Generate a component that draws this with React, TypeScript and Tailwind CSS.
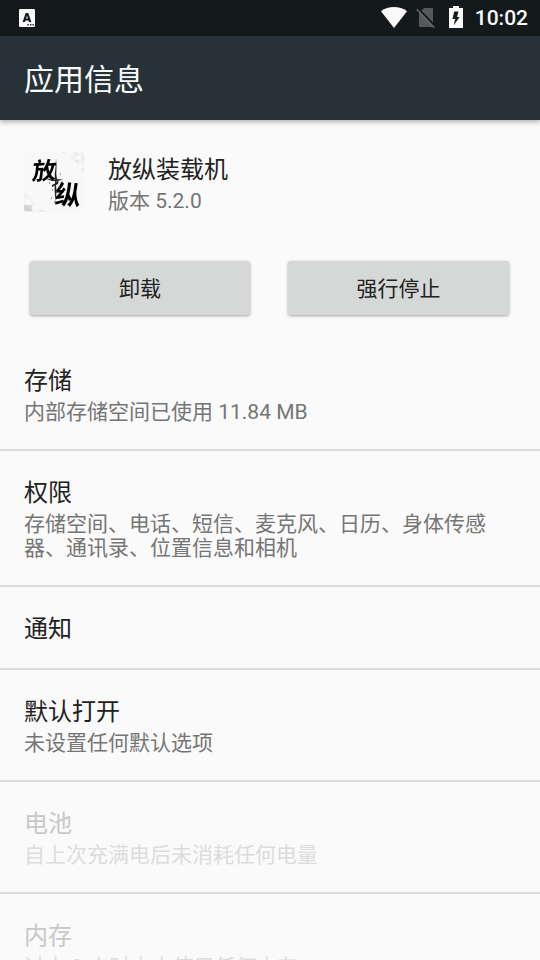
import React from 'react';

type Row = { title: string; summary?: string; disabled?: boolean; height: string };

const rows: Row[] = [
  { title: '存储', summary: '内部存储空间已使用 11.84 MB', height: 'h-[112px]' },
  {
    title: '权限',
    summary: '存储空间、电话、短信、麦克风、日历、身体传感器、通讯录、位置信息和相机',
    height: 'h-[136px]',
  },
  { title: '通知', height: 'h-[83px]' },
  { title: '默认打开', summary: '未设置任何默认选项', height: 'h-[112px]' },
  { title: '电池', summary: '自上次充满电后未消耗任何电量', disabled: true, height: 'h-[112px]' },
  { title: '内存', summary: '过去 3 小时内未使用任何内存', disabled: true, height: 'h-[112px]' },
];

function StatusBar() {
  return (
    <div className="flex h-9 shrink-0 items-center justify-between bg-[#14191c] pr-3 pl-[19px] text-[#fafafa]">
      <svg width="16" height="18" viewBox="0 0 16 18">
        <rect width="16" height="18" rx="1.2" fill="#fafafa" />
        <path d="M3.6 13 6.7 4h2.6l3.1 9H10l-.5-1.6h-3L6 13Zm3.5-3.4h1.8L8 6.6Z" fill="#14191c" fillRule="evenodd" />
        <path d="M8.3 15.8h1.4M11 15.8h1.4M13.5 15.8h1.3" stroke="#14191c" strokeWidth="1.5" />
      </svg>
      <div className="flex items-center">
        <div className="flex items-center pb-0.5">
          <svg width="26" height="21" viewBox="0 0 26 21" className="mr-[9px]">
            <path d="M0 4.2C3.8 1.4 8.2 0 13 0s9.2 1.4 13 4.2L13 21Z" fill="#fafafa" />
          </svg>
          <svg width="20" height="22" viewBox="0 0 20 22" className="mr-[13px]">
            <path d="M8 2h8q1 0 1 1v17q0 1-1 1H4q-1 0-1-1V7Z" fill="#55595b" />
            <path d="M2 2.5 19.5 20.5" stroke="#14191c" strokeWidth="2" />
            <path d="M.8 3.3 18.3 21.8" stroke="#65696b" strokeWidth="1.5" />
          </svg>
          <svg width="14" height="22" viewBox="0 0 14 22" className="mr-3">
            <path d="M4 0h6v2h4v20H0V2h4Z" fill="#fafafa" />
            <path d="M9.5 5.5H5.2L3.5 13h2.6l-1.3 6.3L10.6 11H8Z" fill="#14191c" />
          </svg>
        </div>
        <span className="pt-px text-[21px] leading-none font-medium">10:02</span>
      </div>
    </div>
  );
}

function AppIcon() {
  return (
    <svg width="60" height="60" viewBox="0 0 60 60" className="shrink-0">
      <defs>
        <filter id="ink" x="0" y="0" width="1" height="1">
          <feTurbulence type="fractalNoise" baseFrequency="0.12" numOctaves="3" seed="4" result="n" />
          <feColorMatrix in="n" values="0 0 0 0 .65  0 0 0 0 .65  0 0 0 0 .65  1.5 0 0 0 -.55" result="c" />
          <feComposite in="c" in2="SourceGraphic" operator="in" />
        </filter>
        <filter id="rough" x="-.1" y="-.1" width="1.2" height="1.2">
          <feTurbulence type="fractalNoise" baseFrequency="0.2" numOctaves="1" seed="7" result="n" />
          <feDisplacementMap in="SourceGraphic" in2="n" scale="1.5" xChannelSelector="R" yChannelSelector="G" />
        </filter>
      </defs>
      <rect width="60" height="60" fill="#f8f8f8" />
      <path d="M37 0h23v23Q54 8 37 0ZM0 36Q8 54 24 60H0Z" filter="url(#ink)" />
      <rect x="0" y="53" width="8" height="6" fill="#aaa" opacity=".35" />
      <g
        fill="#050505"
        fontWeight="700"
        fontFamily="'Noto Sans CJK SC', sans-serif"
        filter="url(#rough)"
      >
        <text fontSize="24" transform="translate(7.5 28) skewX(-8) rotate(-3)">放</text>
        <text fontSize="26" transform="translate(30 51.5) skewX(-2) rotate(4)">纵</text>
      </g>
      <path
        d="m32 6 .5 9-.2 7 .7 5-1 6 .5 7-1 10-1-13 .6-7-.4-8 .8-6ZM22 26l7 2 3-1 7 .5-6 1.5-5 0-8-3ZM28 33l4-2 3-4-1 5-6 3Z"
        fill="#222"
      />
      <path d="M27 24h1M36 22h1M25 31h1M38 30h1M28 38h1M27 46h1M35 35h1M30 50h1" stroke="#444" />
    </svg>
  );
}

function ActionButton({ label, width }: { label: string; width: string }) {
  return (
    <button
      className={`h-[54px] rounded-[3px] bg-[#d6d8d7] pt-0.5 text-[21px] leading-6 text-[#212121] shadow-[0_1px_3px_rgba(0,0,0,0.35)] ${width}`}
    >
      {label}
    </button>
  );
}

export default function App() {
  return (
    <div className="flex h-[960px] w-[540px] flex-col overflow-hidden bg-[#fafafa] font-[Roboto,'Noto_Sans_CJK_SC',sans-serif]">
      <StatusBar />
      <header className="z-10 flex h-[84px] shrink-0 items-center bg-[#263238] px-6 pt-[3px] shadow-[0_2px_5px_rgba(0,0,0,0.3)]">
        <h1 className="text-[30px] leading-9 text-[#fafafa]">应用信息</h1>
      </header>
      <section className="flex shrink-0 items-start gap-6 px-6 pt-8">
        <AppIcon />
        <div>
          <div className="pt-1 text-2xl leading-7 text-[#212121]">放纵装载机</div>
          <div className="pt-[5px] text-[21px] leading-6 text-[#757575]">版本 5.2.0</div>
        </div>
      </section>
      <div className="mt-12 flex shrink-0 justify-between pr-[31px] pl-[30px]">
        <ActionButton label="卸载" width="w-[220px]" />
        <ActionButton label="强行停止" width="w-[221px]" />
      </div>
      <main className="mt-6 shrink-0">
        {rows.map((row) => (
          <div
            key={row.title}
            className={`box-border border-b-2 border-[#dcdcdc] px-6 pt-7 ${row.height} ${row.disabled ? 'text-[#c8c8c8]' : 'text-[#212121]'}`}
          >
            <div className="text-2xl leading-7">{row.title}</div>
            {row.summary && (
              <div className={`mt-[5px] text-[21px] leading-6 ${row.disabled ? 'text-[#dcdcdc]' : 'text-[#757575]'}`}>
                {row.summary}
              </div>
            )}
          </div>
        ))}
      </main>
    </div>
  );
}
